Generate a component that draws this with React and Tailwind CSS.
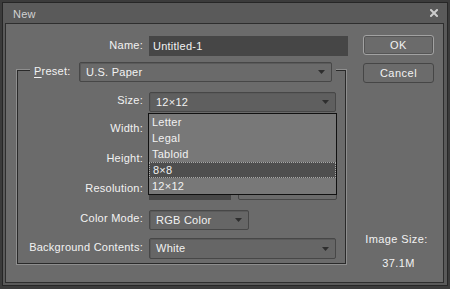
const Arrow = () => (
  <svg width="7" height="4" viewBox="0 0 7 4" className="shrink-0">
    <path d="M0 0H7L3.5 4Z" fill="#2e2e2e" />
  </svg>
);

function Select({ value, className }) {
  return (
    <div
      className={`h-[20px] flex items-center justify-between rounded-[2px] border border-[#474747] shadow-[inset_1px_1px_0_#5a5a5a] pl-[6px] pr-[6px] ${className}`}
    >
      <span className="leading-[13px] whitespace-nowrap">{value}</span>
      <Arrow />
    </div>
  );
}

function Label({ children }) {
  return <div className="w-[125px] shrink-0 text-right leading-[13px] pb-[3px] whitespace-nowrap">{children}</div>;
}

function NumRow({ label, className }) {
  return (
    <div className={`flex items-center h-[20px] ${className}`}>
      <Label>{label}</Label>
      <div className="ml-[6px] w-[82px] h-[20px] bg-[#474747]" />
      <div className="ml-[7px] w-[99px] h-[20px] rounded-[2px] border border-[#474747] bg-[#6b6b6b]" />
    </div>
  );
}

export default function App() {
  const items = ["Letter", "Legal", "Tabloid", "8×8", "12×12"];
  return (
    <div className="w-[450px] h-[289px] bg-[#3b3b3b] pt-[2px] px-[2px] pb-[3px] font-['Liberation_Sans',Arial,sans-serif] text-[11px] tracking-[0.25px] text-[#f2f2f2]">
      <div className="h-full border border-[#262626] bg-[#5a5a5a] flex flex-col">
        {/* Title bar */}
        <div className="h-[20px] shrink-0 flex items-center justify-between pl-[10px] pr-[9px] pt-[2px]">
          <span className="text-[#d2d2d2] leading-[13px]">New</span>
          <svg width="8" height="8" viewBox="0 0 8 8" className="-mt-[3px]">
            <path d="M1 1L7 7M7 1L1 7" stroke="#cccccc" strokeWidth="2" strokeLinecap="square" />
          </svg>
        </div>
        {/* Content */}
        <div className="flex-1 ml-[2px] mr-[3px] mb-[2px] border border-[#2e2e2e] bg-[#6b6b6b] flex">
          {/* Left column */}
          <div className="w-[342px] shrink-0 pt-[12px]">
            <div className="flex items-center h-[20px]">
              <div className="w-[137px] shrink-0 text-right leading-[13px] pb-[2px]">Name:</div>
              <div className="ml-[6px] w-[199px] h-[20px] bg-[#464646] flex items-center pl-[4px] leading-[13px]">Untitled-1</div>
            </div>

            {/* Group box */}
            <div className="ml-[11px] mt-[14px] w-[329px] h-[194px] border border-[#2a2a2a] shadow-[0_0_0_1px_#8e8e8e] flex flex-col">
              <div className="-mt-[9px] ml-[12px] w-fit flex items-center bg-[#6b6b6b] px-[4px]">
                <div className="w-[45px] shrink-0 leading-[13px] pb-[2px]">
                  <span className="underline underline-offset-[2px]">P</span>reset:
                </div>
                <Select value="U.S. Paper" className="w-[253px] bg-[#6a6a6a]" />
              </div>

              <div className="flex items-center h-[20px] mt-[10px]">
                <Label>Size:</Label>
                <div className="ml-[6px] relative">
                  <Select value="12×12" className="w-[187px] bg-[#5f5f5f]" />
                  <div className="absolute z-10 top-[21px] -left-[1px] w-[189px] border border-[#111] bg-[#787878] flex flex-col">
                    {items.map((it) =>
                      it === "8×8" ? (
                        <div key={it} className="h-[16px] flex items-center pl-[3px] bg-[#4e4e4e] border border-dotted border-[#a8a8a8] leading-[13px]">
                          {it}
                        </div>
                      ) : (
                        <div key={it} className="h-[16px] flex items-center pl-[3px] leading-[13px]">
                          {it}
                        </div>
                      )
                    )}
                  </div>
                </div>
              </div>

              <NumRow label="Width:" className="mt-[8px]" />
              <NumRow label="Height:" className="mt-[10px]" />
              <NumRow label="Resolution:" className="mt-[10px]" />

              <div className="flex items-center h-[20px] mt-[10px]">
                <Label>Color Mode:</Label>
                <Select value="RGB Color" className="ml-[6px] w-[100px] bg-[#666666]" />
              </div>

              <div className="flex items-center h-[21px] mt-[8px]">
                <Label>Background Contents:</Label>
                <Select value="White" className="ml-[6px] w-[187px] h-[21px] bg-[#666666]" />
              </div>
            </div>
          </div>

          {/* Right column */}
          <div className="ml-[15px] w-[71px] pt-[11px] flex flex-col">
            <div className="h-[20px] rounded-[3px] border border-[#a2a2a2] shadow-[inset_0_0_0_1px_#555] flex items-center justify-center leading-[13px] tracking-[0.5px]">
              OK
            </div>
            <div className="mt-[8px] h-[20px] rounded-[3px] border border-[#464646] flex items-center justify-center leading-[13px] tracking-[0.5px]">
              Cancel
            </div>
            <div className="mt-[150px] leading-[13px] text-center pr-[4px] tracking-[0.4px]">Image Size:</div>
            <div className="mt-[11px] leading-[13px] text-center tracking-[0.4px]">37.1M</div>
          </div>
        </div>
      </div>
    </div>
  );
}
